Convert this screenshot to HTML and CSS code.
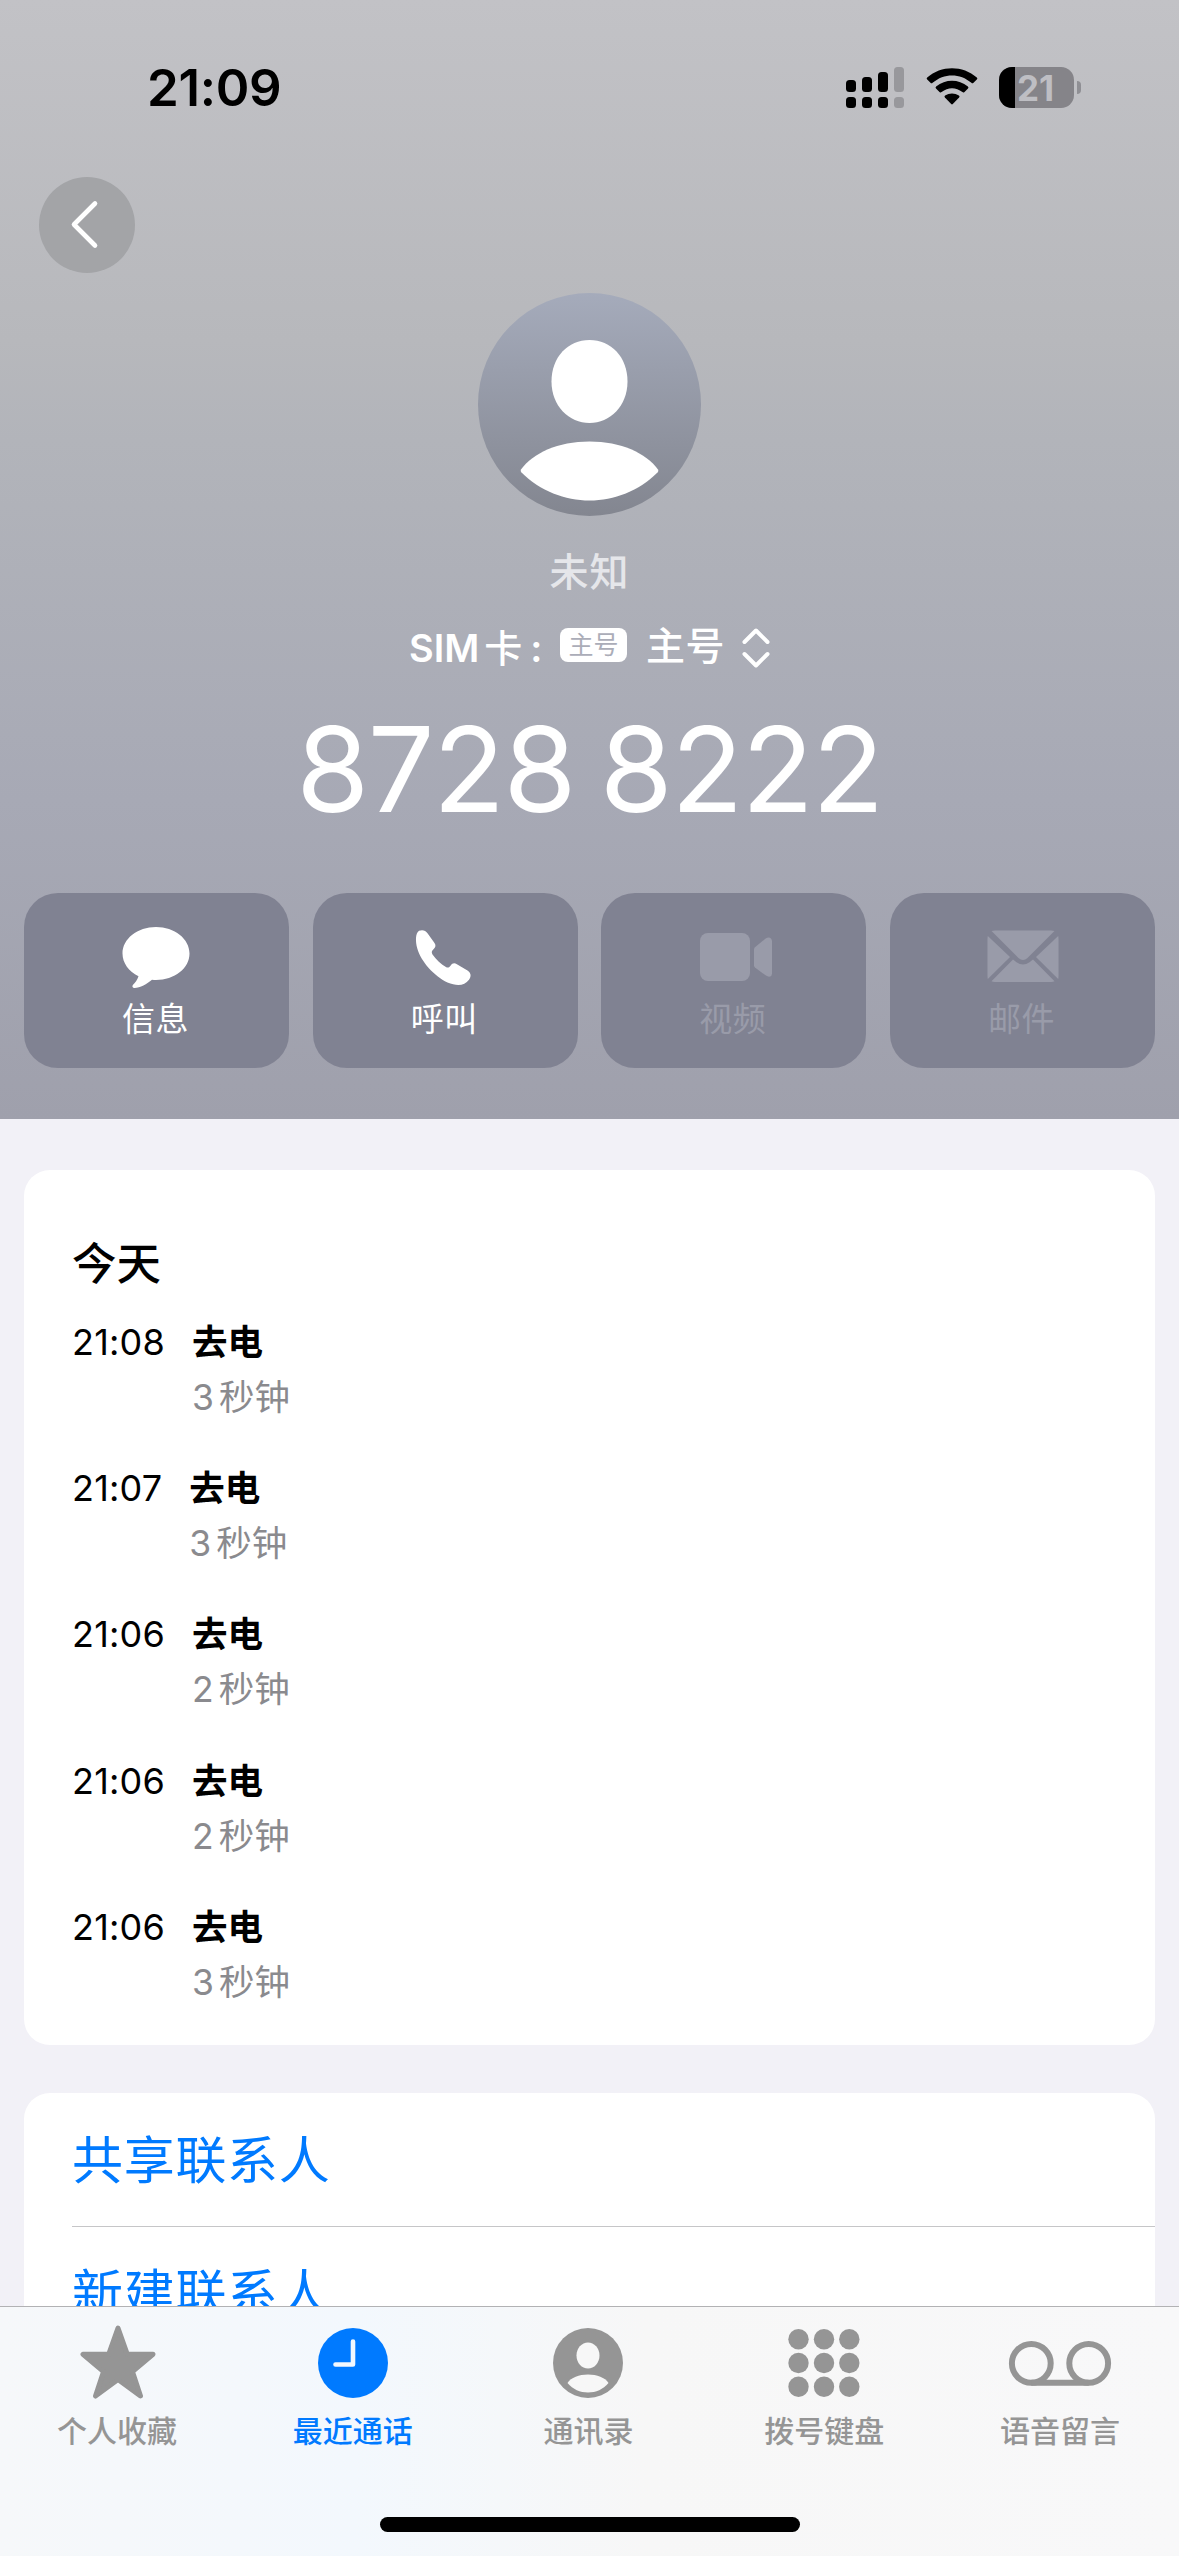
FILE: index.html
```html
<!DOCTYPE html>
<html lang="zh-CN">
<head>
<meta charset="utf-8">
<title>最近通话</title>
<link rel="stylesheet" href="styles.css">
</head>
<body>
<div class="phone">
  <header class="hero">
    <div class="status">
      <div class="clock">21:09</div>
      <div class="indicators">
        <svg class="signal" viewBox="0 0 58 41" width="58" height="41">
          <rect x="0" y="13" width="10" height="12" rx="3.5"/><rect x="16" y="10" width="10" height="15" rx="3.5"/><rect x="32" y="5" width="10" height="20" rx="3.5"/>
          <rect x="0" y="30" width="10" height="11" rx="3.5"/><rect x="16" y="30" width="10" height="11" rx="3.5"/><rect x="32" y="30" width="10" height="11" rx="3.5"/>
          <g fill="#98989c"><rect x="48" y="0" width="10" height="25" rx="3.5"/><rect x="48" y="30" width="10" height="11" rx="3.5"/></g>
        </svg>
        <svg class="wifi" viewBox="0 0 52 38" width="52" height="38">
          <path d="M1.2 11.5Q.2 10.500 1.200 9.600C15-3 37-3 50.800 9.600Q51.800 10.500 50.800 11.500L47.500 14.800Q46.500 15.800 45.400 14.800C34 5 18 5 6.600 14.800Q5.500 15.800 4.500 14.800Z"/>
          <path d="M10 20.400Q9 19.300 10.100 18.400C19.500 10.800 32.500 10.800 41.900 18.400Q43 19.300 42 20.400L38.500 24Q37.500 25 36.400 24.100C30 19 22 19 15.600 24.100Q14.500 25 13.500 24Z"/>
          <path d="M18.900 29.500Q17.900 28.300 19.100 27.400C23.300 24.700 28.700 24.700 32.900 27.400Q34.100 28.300 33.100 29.500L26.800 36Q26 36.800 25.200 36Z"/>
        </svg>
        <div class="battery"><div class="cell"><span class="charge"></span><span class="percent">21</span></div><span class="nub"></span></div>
      </div>
    </div>
    <div class="nav">
      <div class="back">
        <svg viewBox="0 0 96 96" width="96" height="96"><path d="M56 26.500L35 47.500L56 68.500" fill="none" stroke="#fff" stroke-width="4.600" stroke-linecap="round" stroke-linejoin="round"/></svg>
      </div>
    </div>
    <svg class="avatar" viewBox="0 0 223 223" width="223" height="223">
      <defs><linearGradient id="av" x1="0" y1="0" x2="0" y2="1"><stop offset="0" stop-color="#a5abbb"/><stop offset="1" stop-color="#838690"/></linearGradient></defs>
      <circle cx="111.500" cy="111.500" r="111.500" fill="url(#av)"/>
      <path d="M111.500 47C133 47 149.500 64 149.500 88.500C149.500 113 132 130 111.500 130C91 130 73.500 113 73.500 88.500C73.500 64 90 47 111.500 47Z" fill="#fff"/>
      <path d="M43 176.500C55 160 80 148.500 111.500 148.500C143 148.500 168 160 180 176.500Q181 178 179.500 179.500C161 198 136 207.500 111.500 207.500C87 207.500 62 198 43.500 179.500Q42 178 43 176.500Z" fill="#fff"/>
    </svg>
    <div class="name">未知</div>
    <div class="sim">
      <span class="sim-label">SIM<span class="ka">卡</span><span class="colon">:</span></span>
      <span class="sim-badge">主号</span>
      <span class="sim-name">主号</span>
      <svg viewBox="0 0 28 40" width="28" height="40"><path d="M2.500 14L14 2.500L25.500 14M2.500 26L14 37.500L25.500 26" fill="none" stroke="#fff" stroke-width="4" stroke-linecap="round" stroke-linejoin="round"/></svg>
    </div>
    <div class="number">8728 8222</div>
    <div class="actions">
      <div class="action">
        <svg viewBox="0 0 72 64" width="72" height="64"><path d="M36 1C54.500 1 69.500 12.800 69.500 27.500C69.500 42.300 54.500 54 36 54Q34 54 32 53.800C27 58 20 62 14.500 62Q11.500 61.700 12.800 59C15 57 17.500 53.500 18.500 50.200C8.800 45.500 2.500 37 2.500 27.500C2.500 12.800 17.500 1 36 1Z"/></svg>
        <span>信息</span>
      </div>
      <div class="action">
        <svg viewBox="0 0 72 64" width="72" height="64"><path d="M11 4.800C14.500 3.600 17.500 4.300 19.500 7.300L26.500 17C28.200 19.500 27.600 21.200 25.500 23.300C23.600 25.200 23.300 26.500 24.500 28.600C28.300 34 33 38.400 38.300 41.300C40 42 41 41.600 42.700 39.400C44.300 37 46.500 36.600 48.900 38.200L59.500 44.500C63.200 47 63.400 50.500 61 53.800C56.300 60.200 48.500 60.200 39.500 56.500C26 50 13 35.500 9.300 22.500C7.300 15 7.400 7.500 11 4.800Z"/></svg>
        <span>呼叫</span>
      </div>
      <div class="action off">
        <svg viewBox="0 0 76 64" width="76" height="64"><rect x="4" y="7" width="50" height="48" rx="8"/><path d="M58 23.500Q58 22.300 59 21.300L70 12.200Q72 11 74 11.700Q75.800 12.500 76 15V47.500Q75.800 50 74 50.600Q72 51 70 49.600L59 41.500Q58 40.500 58 39.300Z"/></svg>
        <span>视频</span>
      </div>
      <div class="action off">
        <svg viewBox="0 0 72 64" width="72" height="64"><path d="M4.500 5Q6 4.500 8 4.500H64Q66 4.500 67.500 5L40.500 32Q36 36 31.500 32Z"/><path d="M.800 10L23 31L.800 53Q.500 52 .500 50V13Q.500 11 .800 10Z"/><path d="M71.200 10L49 31L71.200 53Q71.500 52 71.500 50V13Q71.500 11 71.200 10Z"/><path d="M4.500 55.300L26 33.500L29.500 36.200Q36 41 42.500 36.200L46 33.500L67.500 55.300Q66 56 64 56H8Q6 56 4.500 55.300Z"/></svg>
        <span>邮件</span>
      </div>
    </div>
  </header>

  <main class="content">
    <section class="card log">
      <h2>今天</h2>
      <div class="call"><span class="time">21:08</span><div><b>去电</b><small>3<i>秒钟</i></small></div></div>
      <div class="call"><span class="time">21:07</span><div><b>去电</b><small>3<i>秒钟</i></small></div></div>
      <div class="call"><span class="time">21:06</span><div><b>去电</b><small>2<i>秒钟</i></small></div></div>
      <div class="call"><span class="time">21:06</span><div><b>去电</b><small>2<i>秒钟</i></small></div></div>
      <div class="call"><span class="time">21:06</span><div><b>去电</b><small>3<i>秒钟</i></small></div></div>
    </section>
    <section class="card links">
      <div class="link">共享联系人</div>
      <div class="link">新建联系人</div>
    </section>
  </main>

  <nav class="tabs">
    <div class="tab">
      <svg viewBox="0 0 104 80" width="104" height="80"><path d="M53 9L62.300 35.300H88L67.500 52.700L75.500 77L53 60.500L30.500 77L38.500 52.700L18 35.300H43.700Z" stroke="currentColor" stroke-width="5" stroke-linejoin="round"/></svg>
      <span>个人收藏</span>
    </div>
    <div class="tab active">
      <svg viewBox="0 0 104 80" width="104" height="80"><circle cx="52" cy="44" r="35"/><path d="M52 22.500V45.500H34.500" fill="none" stroke="#f3f8fe" stroke-width="4.600" stroke-linecap="round" stroke-linejoin="round"/></svg>
      <span>最近通话</span>
    </div>
    <div class="tab">
      <svg viewBox="0 0 104 80" width="104" height="80"><circle cx="52" cy="44" r="35"/><ellipse cx="52" cy="36.500" rx="11.500" ry="13" fill="#f7f7f7"/><path d="M31.500 64C35 58.500 43 55.500 52 55.500S69 58.500 72.500 64C67 70.500 60 73.500 52 73.500S37 70.500 31.500 64Z" fill="#f7f7f7"/></svg>
      <span>通讯录</span>
    </div>
    <div class="tab">
      <svg viewBox="0 0 104 80" width="104" height="80"><circle cx="26.500" cy="20.300" r="10.200"/><circle cx="52" cy="20.300" r="10.200"/><circle cx="77.300" cy="20.300" r="10.200"/><circle cx="26.500" cy="44" r="10.200"/><circle cx="52" cy="44" r="10.200"/><circle cx="77.300" cy="44" r="10.200"/><circle cx="26.500" cy="67.800" r="10.200"/><circle cx="52" cy="67.800" r="10.200"/><circle cx="77.300" cy="67.800" r="10.200"/></svg>
      <span>拨号键盘</span>
    </div>
    <div class="tab">
      <svg viewBox="0 0 104 80" width="104" height="80"><g fill="none" stroke="currentColor" stroke-width="6"><circle cx="23.300" cy="44.300" r="19.400"/><circle cx="80.700" cy="44.300" r="19.400"/><path d="M23.300 63.700H80.700"/></g></svg>
      <span>语音留言</span>
    </div>
    <div class="home"></div>
  </nav>
</div>
</body>
</html>
```
FILE: styles.css
```css
* { box-sizing: border-box; }
body {
  margin: 0;
  font-family: Inter, "Noto Sans CJK SC", sans-serif;
  font-feature-settings: "calt" 0;
}
svg { display: block; fill: currentColor; }
.phone {
  width: 1179px;
  height: 2556px;
  overflow: hidden;
  display: flex;
  flex-direction: column;
  background: #f2f1f7;
}
.hero {
  height: 1119px;
  flex: none;
  display: flex;
  flex-direction: column;
  align-items: center;
  background: linear-gradient(#c2c2c6 0, #b7b8bc 340px, #b2b4ba 440px, #a7a9b5 800px, #9fa0ac 1119px);
  color: #fff;
}
.status {
  width: 100%;
  height: 177px;
  padding: 67px 98px 0 147px;
  display: flex;
  justify-content: space-between;
  align-items: flex-start;
  color: #000;
}
.clock { font-size: 51px; font-weight: 600; line-height: 42px; letter-spacing: -0.300px; }
.indicators { display: flex; align-items: flex-start; }
.wifi { margin: 1px 21px 0 22px; }
.battery { display: flex; align-items: center; gap: 3px; }
.cell {
  width: 75px;
  height: 41px;
  border-radius: 13px;
  overflow: hidden;
  display: flex;
  background: #858489;
}
.charge { width: 16px; flex: none; background: #000; }
.percent {
  padding-left: 2px;
  font-size: 35px;
  font-weight: 700;
  line-height: 42px;
  color: #bebec3;
}
.nub { width: 4px; height: 13px; border-radius: 0 4px 4px 0; background: #8f8f94; }
.nav { width: 100%; height: 116px; padding-left: 39px; }
.back { width: 96px; height: 96px; border-radius: 50%; background: #a3a4a7; }
.avatar { flex: none; }
.name {
  margin-top: 27px;
  font-size: 39px;
  line-height: 58px;
  font-weight: 500;
  letter-spacing: 1px;
  color: #e5e6ea;
}
.sim {
  margin-top: 18px;
  height: 58px;
  display: flex;
  align-items: center;
  font-size: 38px;
  line-height: 58px;
  font-weight: 500;
}
.sim-label { width: 151px; font-weight: 600; white-space: nowrap; }
.ka { margin-left: 5px; font-weight: 500; }
.colon { margin-left: 8px; }
.sim-badge {
  width: 67px;
  height: 34px;
  margin: -6px 19px 0 0;
  border-radius: 8px;
  background: #fff;
  color: #abadb8;
  font-size: 25px;
  font-weight: 400;
  line-height: 35px;
  text-align: center;
}
.sim-name { margin: -4px 17px 0 0; font-size: 39px; letter-spacing: 0.5px; }
.number {
  margin-top: 32px;
  font-size: 118px;
  line-height: 120px;
  letter-spacing: -1.5px;
  word-spacing: -7px;
  white-space: nowrap;
}
.actions {
  width: 1131px;
  margin-top: auto;
  margin-bottom: 51px;
  display: grid;
  grid-template-columns: repeat(4, 265px);
  justify-content: space-between;
}
.action {
  height: 175px;
  padding: 33px 2px 0 0;
  border-radius: 34px;
  background: #808292;
  display: flex;
  flex-direction: column;
  align-items: center;
  font-size: 33px;
  line-height: 48px;
}
.action span { margin-top: 5px; letter-spacing: 0.5px; }
.action.off { color: #999ba9; }
.action.off svg { margin-left: 3px; }
.content { height: 1187px; flex: none; padding: 51px 24px 0; overflow: hidden; }
.card { background: #fff; border-radius: 26px; }
.log { height: 875px; padding: 62px 48px 0; }
h2 { margin: 0 0 16px; font-size: 44.500px; line-height: 64px; font-weight: 500; }
.call {
  height: 146.200px;
  display: flex;
  gap: 27px;
  font-size: 36px;
  line-height: 62px;
}
.time { line-height: 60px; letter-spacing: 0.200px; }
.call b { display: block; font-size: 35.500px; font-weight: 700; height: 56px; }
.call small { display: flex; gap: 5px; font-size: 35.500px; line-height: 60px; color: #8a8a8e; }
.call i { font-style: normal; }
.links { margin-top: 48px; height: 400px; padding-left: 48px; }
.link { height: 133px; font-size: 51px; line-height: 136px; color: #007aff; letter-spacing: 0.700px; }
.link + .link { border-top: 1px solid #c6c6c8; line-height: 134px; }
.tabs {
  position: relative;
  height: 250px;
  flex: none;
  padding-top: 12px;
  border-top: 1px solid #b2b2b4;
  display: grid;
  grid-template-columns: repeat(5, 1fr);
  background: linear-gradient(90deg, #f6f8fa, #f3f8fd 30%, #f7f7f7 55%, #f8f8f9);
  color: #959595;
}
.tab { padding-right: 2px; display: flex; flex-direction: column; align-items: center; font-size: 30px; font-weight: 500; line-height: 44px; }
.tab span { margin-top: 10px; }
.tab.active { color: #007aff; }
.home { position: absolute; left: 380px; top: 210px; width: 420px; height: 15px; border-radius: 8px; background: #000; }
```
